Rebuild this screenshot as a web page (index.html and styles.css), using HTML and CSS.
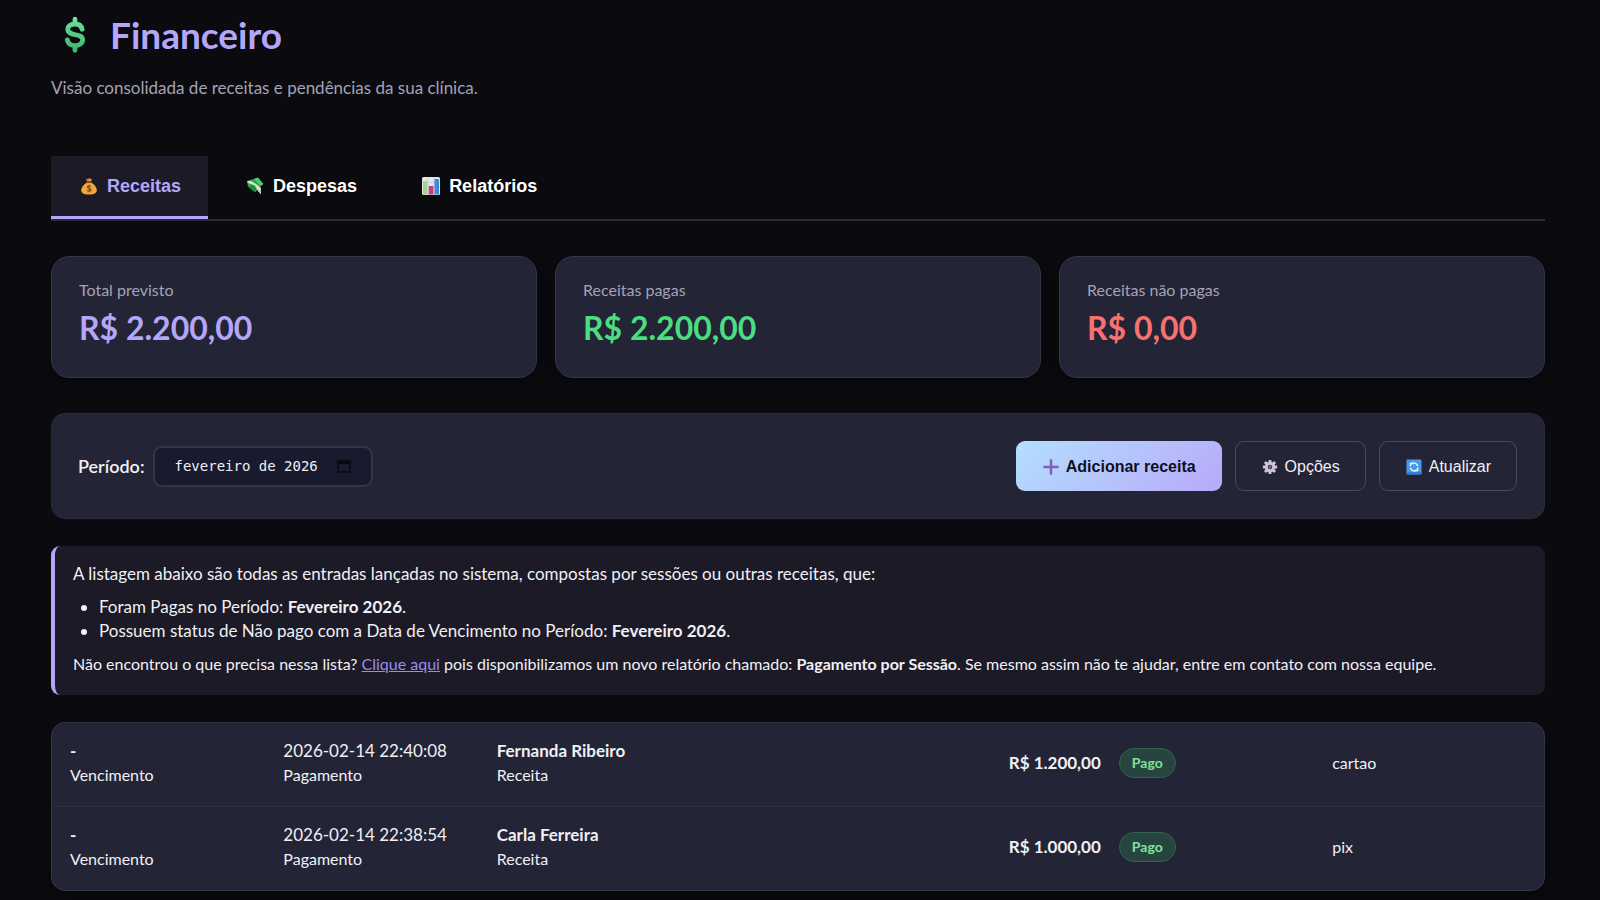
FILE: index.html
```html
<!DOCTYPE html>
<html lang="pt-BR">
  <head>
    <meta charset="UTF-8" />
    <meta name="viewport" content="width=device-width, initial-scale=1.0" />
    <title>Financeiro</title>
    <link rel="stylesheet" href="styles.css">
  </head>
  <body>
  <main class="container">
    <header class="page-header">
      <h1>
        <svg class="title-icon" viewBox="0 0 46 46" aria-hidden="true">
          <defs>
            <linearGradient id="dollar" x1="0" y1="0" x2="0" y2="1">
              <stop offset="0" stop-color="#6ce09a" />
              <stop offset="1" stop-color="#3fb573" />
            </linearGradient>
          </defs>
          <path d="M24 6.500v5M24 34v5M31.500 17c-.8-4-4-5.500-7.500-5.500-4.300 0-7.500 2-7.500 5.500 0 8 15.500 3.500 15.500 11 0 4-3.500 6-8 6s-7.500-2-8-6" fill="none" stroke="url(#dollar)" stroke-width="5" stroke-linecap="round" />
        </svg>
        Financeiro
      </h1>
      <p class="subtitle">Visão consolidada de receitas e pendências da sua clínica.</p>
    </header>

    <nav class="tabs">
      <button type="button" class="tab active">
        <svg class="icon" viewBox="0 0 18 18" aria-hidden="true">
          <path d="M6 1.500l2 .8L9.500 .8l1 1.400 1.800-.6-1.300 3.200H7.200z" fill="#d9902f" />
          <path d="M7 5.500h4.200c3.300 2 5.600 5 5.600 7.700 0 2.800-2.500 4.300-7.800 4.300s-7.800-1.500-7.800-4.300C1.200 10.500 3.700 7.500 7 5.500z" fill="#f2a73b" />
          <path d="M6.500 5.300h5" stroke="#7b431b" stroke-width="1.400" stroke-linecap="round" />
          <path d="M11 9.500c-.4-.8-3.600-1.200-3.600.6 0 1.700 3.700 1 3.700 2.700 0 1.800-3.500 1.600-4 .4M9.200 7.800v7.400" fill="none" stroke="#854b1c" stroke-width="1.200" />
        </svg>
        Receitas
      </button>
      <button type="button" class="tab">
        <svg class="icon" viewBox="0 0 18 18" aria-hidden="true">
          <path d="M1 4l9.500-3 6.500 6.500-4.500 3.500-3 4L2 9.500z" fill="#2da65a" />
          <path d="M8 2l4-1.500 5.500 6.500-3 1.500z" fill="#4ccd75" />
          <path d="M2.500 10l4-2.500 4 4L8 15z" fill="#188c43" />
          <path d="M1 4.500l3.500-.8L10 7l5 4v6l-3.500-3.500L9 8.500 2 6z" fill="#e5e0bd" />
          <path d="M12.500 11.500l2.500 2V17l-3-3z" fill="#c8c8cb" />
        </svg>
        Despesas
      </button>
      <button type="button" class="tab">
        <svg class="icon" viewBox="0 0 18 18" aria-hidden="true">
          <rect width="18" height="18" rx="1.500" fill="#e3e7ee" />
          <path d="M0 5.500h18M0 10h18M6 0v18M12 0v18" stroke="#bdc8d6" stroke-width=".7" />
          <rect x="1" y="4" width="4.500" height="13.500" fill="#a5d58a" />
          <rect x="6.800" y="9" width="4.600" height="8.500" fill="#d0387d" />
          <rect x="12.500" y="2" width="4.500" height="15.500" fill="#3d8ad8" />
        </svg>
        Relatórios
      </button>
    </nav>

    <section class="summary">
      <div class="card">
        <div class="card-label">Total previsto</div>
        <div class="card-value total">R$ 2.200,00</div>
      </div>
      <div class="card">
        <div class="card-label">Receitas pagas</div>
        <div class="card-value paid">R$ 2.200,00</div>
      </div>
      <div class="card">
        <div class="card-label">Receitas não pagas</div>
        <div class="card-value unpaid">R$ 0,00</div>
      </div>
    </section>

    <section class="toolbar">
      <div class="period">
        <label for="periodo">Período:</label>
        <div class="month-field">
          <input type="text" id="periodo" name="periodo" value="fevereiro de 2026" />
          <svg class="calendar" viewBox="0 0 14 14" aria-hidden="true">
            <path d="M1 2h12v11H1zM1 4h12M4 .5v2M10 .5v2" fill="none" stroke="#090911" stroke-width="1.500" />
            <path d="M1 2h12v3H1z" fill="#090911" />
          </svg>
        </div>
      </div>
      <div class="actions">
        <button type="button" class="btn btn-primary">
          <svg class="icon" viewBox="0 0 18 18" aria-hidden="true">
            <path d="M9 1.500v15M1.500 9h15" stroke="#8062b5" stroke-width="2.800" stroke-linecap="round" />
          </svg>
          Adicionar receita
        </button>
        <button type="button" class="btn">
          <svg class="icon" viewBox="0 0 18 18" aria-hidden="true">
            <path d="M9 1v16M1 9h16M3.300 3.300l11.400 11.400M14.700 3.300L3.300 14.700" stroke="#cfc4da" stroke-width="3.200" />
            <circle cx="9" cy="9" r="5.800" fill="#cfc4da" />
            <circle cx="9" cy="9" r="2.600" fill="#4a4259" />
            <circle cx="9" cy="9" r="1" fill="#8b8199" />
          </svg>
          Opções
        </button>
        <button type="button" class="btn">
          <svg class="icon" viewBox="0 0 18 18" aria-hidden="true">
            <rect x=".5" y=".5" width="17" height="17" rx="1.500" fill="#4699ed" />
            <path d="M.5 15h17v1a1.500 1.500 0 0 1-1.500 1.500H2A1.500 1.500 0 0 1 .5 16z" fill="#3277cc" />
            <path d="M5 8.500V5h3.500M5.500 5.500C8 3.500 12.500 4.500 13 8M13 9.500V13H9.500M12.500 12.500C10 14.500 5.500 13.500 5 10" fill="none" stroke="#eef6ff" stroke-width="1.600" />
          </svg>
          Atualizar
        </button>
      </div>
    </section>

    <section class="info">
      <p>A listagem abaixo são todas as entradas lançadas no sistema, compostas por sessões ou outras receitas, que:</p>
      <ul>
        <li>Foram Pagas no Período: <strong>Fevereiro 2026</strong>.</li>
        <li>Possuem status de Não pago com a Data de Vencimento no Período: <strong>Fevereiro 2026</strong>.</li>
      </ul>
      <p class="info-help">Não encontrou o que precisa nessa lista? <a href="#">Clique aqui</a> pois disponibilizamos um novo relatório chamado: <strong>Pagamento por Sessão</strong>. Se mesmo assim não te ajudar, entre em contato com nossa equipe.</p>
    </section>

    <div class="list">
      <table>
        <tbody>
          <tr>
            <td class="col-date"><div class="main"><strong>-</strong></div><div class="sub">Vencimento</div></td>
            <td class="col-date"><div class="main">2026-02-14 22:40:08</div><div class="sub">Pagamento</div></td>
            <td class="col-name"><div class="main"><strong>Fernanda Ribeiro</strong></div><div class="sub">Receita</div></td>
            <td class="col-value">R$ 1.200,00</td>
            <td class="col-status"><span class="badge">Pago</span></td>
            <td class="col-method">cartao</td>
          </tr>
          <tr>
            <td class="col-date"><div class="main"><strong>-</strong></div><div class="sub">Vencimento</div></td>
            <td class="col-date"><div class="main">2026-02-14 22:38:54</div><div class="sub">Pagamento</div></td>
            <td class="col-name"><div class="main"><strong>Carla Ferreira</strong></div><div class="sub">Receita</div></td>
            <td class="col-value">R$ 1.000,00</td>
            <td class="col-status"><span class="badge">Pago</span></td>
            <td class="col-method">pix</td>
          </tr>
        </tbody>
      </table>
    </div>
  </main>
  </body>
</html>
```
FILE: styles.css
```css
* {
  margin: 0;
  padding: 0;
  box-sizing: border-box;
}

body {
  background-color: #0a0a0f;
  color: #f0f0f5;
  font-family: Lato, sans-serif;
  font-size: 16px;
  line-height: 24px;
}

.container {
  padding: 13px 55px 9px 51px;
}

/* Header */
h1 {
  display: flex;
  align-items: center;
  gap: 13px;
  color: #b4a7fa;
  font-size: 37px;
  font-weight: 700;
  line-height: 44px;
}

.title-icon {
  width: 46px;
  height: 44px;
}

.subtitle {
  margin-top: 18px;
  color: #a3a3b5;
  font-size: 17px;
  line-height: 26px;
}

/* Tabs */
.tabs {
  display: flex;
  gap: 9px;
  margin-top: 55px;
  border-bottom: 2px solid #2a2a38;
}

.tab {
  display: flex;
  align-items: center;
  gap: 9px;
  height: 63px;
  padding: 0 27px 0 29px;
  border: none;
  border-bottom: 3px solid transparent;
  background: none;
  color: #ffffff;
  font-family: "Liberation Sans", sans-serif;
  font-size: 18px;
  font-weight: 700;
  cursor: pointer;
}

.tab.active {
  background: #1c1a26;
  border-bottom-color: #b4a7fa;
  color: #b4a7fa;
}

.icon {
  width: 18px;
  height: 18px;
  flex: none;
}

/* Summary cards */
.summary {
  display: grid;
  grid-template-columns: repeat(3, 1fr);
  gap: 18px;
  margin-top: 35px;
}

.card,
.toolbar,
.list {
  background: #232436;
  border: 1px solid #353548;
}

.card {
  padding: 21px 27px 29px;
  border-radius: 18px;
  box-shadow: 0 4px 14px rgba(0, 0, 0, 0.3);
}

.card-label {
  color: #a3a3b5;
}

.card-value {
  margin-top: 6px;
  font-size: 32px;
  font-weight: 700;
  line-height: 40px;
}

.total {
  color: #b4a7fa;
}

.paid {
  color: #4ade80;
}

.unpaid {
  color: #f87171;
}

/* Toolbar */
.toolbar {
  display: flex;
  align-items: center;
  justify-content: space-between;
  margin-top: 35px;
  padding: 27px 27px 27px 26px;
  border-radius: 14px;
  border-color: #2b2b3b;
}

.period {
  display: flex;
  align-items: center;
  gap: 9px;
}

.period label {
  font-size: 18px;
  font-weight: 600;
}

.month-field {
  display: flex;
  align-items: center;
  width: 220px;
  height: 41px;
  padding: 0 20px 0 19px;
  background: #1a1a2e;
  border: 2px solid #35354a;
  border-radius: 9px;
}

.month-field input {
  flex: 1;
  min-width: 0;
  background: none;
  border: none;
  outline: none;
  color: #f0f0f5;
  font-family: "DejaVu Sans Mono", monospace;
  font-size: 14px;
}

.calendar {
  width: 14px;
  height: 14px;
}

.actions {
  display: flex;
  gap: 13px;
}

.btn {
  display: flex;
  align-items: center;
  gap: 7px;
  height: 50px;
  padding: 2px 25px 0 26px;
  background: transparent;
  border: 1px solid #4a4a60;
  border-radius: 9px;
  color: #f0f0f5;
  font-family: "Liberation Sans", sans-serif;
  font-size: 16px;
  cursor: pointer;
}

.btn .icon {
  width: 16px;
  height: 16px;
}

.btn-primary {
  background: linear-gradient(135deg, #b3dfff, #b8a9fa);
  border-color: transparent;
  background-origin: border-box;
  color: #0f0f1e;
  font-weight: 700;
}

/* Info box */
.info {
  margin-top: 27px;
  padding: 16px 18px 19px;
  background: #1c1a26;
  border-left: 4px solid #b4a7fa;
  border-radius: 9px;
  font-size: 17px;
}

.info ul {
  margin: 9px 0;
  padding-left: 26px;
}

.info-help {
  font-size: 16px;
}

.info a {
  color: #9d8bea;
}

/* List */
.list {
  margin-top: 27px;
  border-radius: 14px;
  box-shadow: 0 4px 14px rgba(0, 0, 0, 0.3);
}

table {
  width: 100%;
  table-layout: fixed;
  border-collapse: collapse;
}

td {
  padding: 16px 0 19px 18px;
  vertical-align: middle;
}

tr + tr td {
  border-top: 1px solid #2d2d3e;
}

.main {
  font-size: 17px;
}

.col-date {
  width: 14.3%;
}

.col-name {
  width: 28%;
}

.col-value {
  width: 13.7%;
  font-size: 17px;
  font-weight: 700;
  text-align: right;
}

.col-status {
  width: 14.3%;
}

.badge {
  display: inline-block;
  padding: 3px 12px;
  background: #28443f;
  border: 1px solid #346051;
  border-radius: 15px;
  color: #7ee2a0;
  font-size: 14px;
  font-weight: 700;
  line-height: 22px;
}
```
